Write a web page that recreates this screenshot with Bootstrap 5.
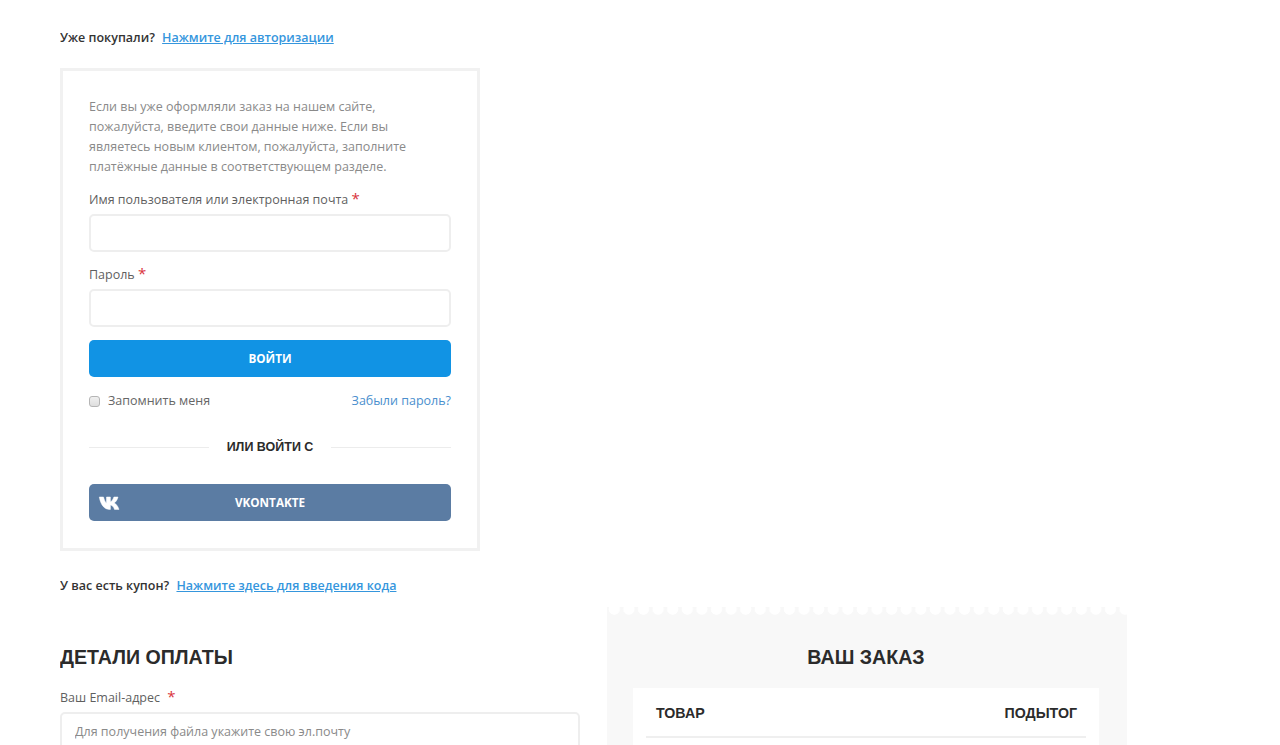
<!DOCTYPE html>
<html lang="ru">
<head>
<meta charset="utf-8">
<title>Оформление заказа</title>
<link href="https://cdn.jsdelivr.net/npm/bootstrap@5.3.0/dist/css/bootstrap.min.css" rel="stylesheet">
<style>
html,body{height:745px;overflow:hidden}
body{font-family:"Open Sans","Noto Sans",sans-serif;font-size:13px;color:#5f5f5f;background:#fff}
.shell{width:1067px;margin-left:60px;padding-top:29px;height:745px;overflow:hidden}
.notice{height:17px;line-height:17px;font-size:12.5px;color:#333;font-weight:600;white-space:nowrap}
.notice a{color:#3596dd;margin-left:4px}
.notice-coupon{margin-top:26px}
.login-box{width:420px;height:483px;margin-top:22px;border:3px solid #f1f1f1;padding:26px 26px 0;display:flex;flex-direction:column}
.intro{color:#8a8a8a;line-height:20px;margin:0 0 13px;font-size:12.5px}
.lbl{display:block;line-height:20px;margin:0 0 4px;color:#5f5f5f;font-size:12.5px;white-space:nowrap}
.req{color:#d9323c;font-size:15px;line-height:14px}
.fld{display:block;width:100%;height:38px;border:2px solid #eeeeee;border-radius:5px;background:#fff;padding:0 13px;font-size:12.5px;color:#777;outline:0}
.fld::placeholder{color:#8a8a8a;opacity:1}
.mb-fld{margin-bottom:13px}
.act{display:flex;align-items:center;justify-content:center;position:relative;flex:none;width:100%;height:37px;border:0;border-radius:5px;color:#fff;font-weight:700;font-size:11.7px;padding:0}
.act-blue{background:#1193e4}
.act-vk{background:#5b7ca3}
.act-vk svg{position:absolute;left:9px;top:12px}
.opts{height:20px;margin-top:14px;font-size:12.5px;line-height:20px;color:#666}
.opts a{color:#4a8fce;text-decoration:none}
.tick{width:11px;height:11px;border:1px solid #b5b5b5;border-radius:3px;background:linear-gradient(#f0f0f0,#dedede);margin-right:8px}
.divider{height:20px;margin-top:26px;margin-bottom:27px;font-family:"Liberation Sans",sans-serif;font-weight:700;font-size:12.5px;color:#2b2b2b;white-space:nowrap}
.divider i{display:block;flex:1;height:1px;background:#ececec}
.divider span{padding:0 18px}
.cols{display:flex;gap:27px;margin-top:18px}
.cols>div{width:520px;flex:none}
.billing{padding-top:33px}
.ttl{font-family:"Liberation Sans",sans-serif;font-weight:700;font-size:19.6px;line-height:24px;color:#2b2b2b;margin:0}
.billing .lbl{margin:19px 0 4px}
.billing .req{margin-left:4px}
.order{background-color:#f8f8f8;position:relative;height:300px;padding:38px 28px 0 26px;margin-top:-5px}
.order::before{content:"";position:absolute;left:0;right:0;top:0;height:10px;background:radial-gradient(circle at 7.3px 2px,#fff 5.4px,transparent 6px) 0 0/14.6px 10px repeat-x}
.order .ttl{text-align:center}
.sheet{background:#fff;margin-top:19px;padding:0 13px;height:200px}
.sheet-head{height:50px;border-bottom:2px solid #efefef;padding:4px 9px 0 10px;font-family:"Liberation Sans",sans-serif;font-weight:700;font-size:14.2px;color:#2b2b2b}
</style>
</head>
<body>
<div class="shell">
  <p class="notice m-0">Уже покупали? <a href="#">Нажмите для авторизации</a></p>
  <form class="login-box">
    <p class="intro">Если вы уже оформляли заказ на нашем сайте,<br>пожалуйста, введите свои данные ниже. Если вы<br>являетесь новым клиентом, пожалуйста, заполните<br>платёжные данные в соответствующем разделе.</p>
    <label class="lbl">Имя пользователя или электронная почта <span class="req">*</span></label>
    <input class="fld mb-fld" type="text">
    <label class="lbl">Пароль <span class="req">*</span></label>
    <input class="fld mb-fld" type="password">
    <button class="act act-blue" type="button">ВОЙТИ</button>
    <div class="opts d-flex align-items-center justify-content-between">
      <span class="d-flex align-items-center"><span class="tick"></span>Запомнить меня</span>
      <a href="#">Забыли пароль?</a>
    </div>
    <div class="divider d-flex align-items-center"><i></i><span>ИЛИ ВОЙТИ С</span><i></i></div>
    <button class="act act-vk" type="button">
      <svg width="22" height="14" viewBox="0 0 19.400 14" aria-hidden="true"><path fill="#fff" stroke="#fff" stroke-width=".5" d="M0 1h4.200c.7 3 1.900 5.300 3 6.200V1h3.900v4.800c1.300-.3 2.600-2.200 3.500-4.800h4.100c-.6 2.800-2.300 5-3.700 6 1.500.8 3.600 2.900 4.700 6.400h-4.500c-.8-2.500-2.300-4-4.100-4.300v4.300h-1.200C5.700 13.400 1.400 9.500 0 1z"/></svg>
      VKONTAKTE
    </button>
  </form>
  <p class="notice notice-coupon mb-0">У вас есть купон? <a href="#">Нажмите здесь для введения кода</a></p>
  <div class="cols">
    <div class="billing">
      <h2 class="ttl">ДЕТАЛИ ОПЛАТЫ</h2>
      <label class="lbl">Ваш Email-адрес <span class="req">*</span></label>
      <input class="fld" type="email" placeholder="Для получения файла укажите свою эл.почту">
    </div>
    <div class="order">
      <h2 class="ttl">ВАШ ЗАКАЗ</h2>
      <div class="sheet">
        <div class="sheet-head d-flex align-items-center justify-content-between"><span>ТОВАР</span><span>ПОДЫТОГ</span></div>
      </div>
    </div>
  </div>
</div>
<script src="https://cdn.jsdelivr.net/npm/bootstrap@5.3.0/dist/js/bootstrap.bundle.min.js"></script>
</body>
</html>
